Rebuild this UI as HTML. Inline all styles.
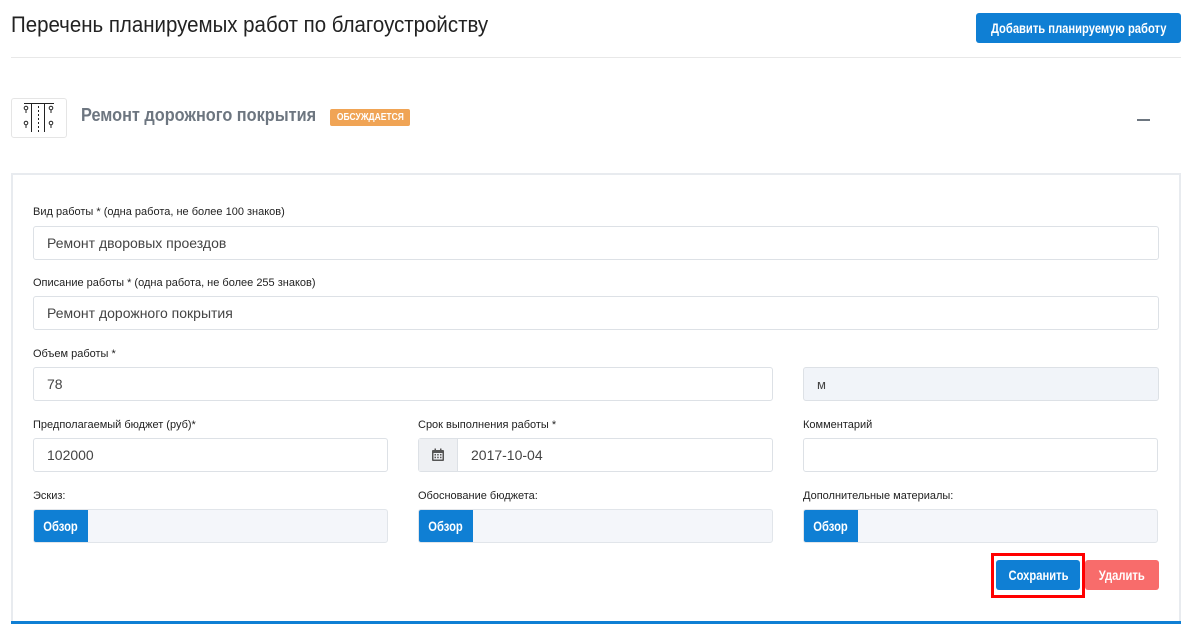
<!DOCTYPE html>
<html><head><meta charset="utf-8"><style>
*{box-sizing:border-box;margin:0;padding:0}
body{width:1193px;height:641px;background:#fff;font-family:"Liberation Sans",sans-serif;position:relative;overflow:hidden;color:#333}
.a{position:absolute}
.cond{font-weight:bold;white-space:nowrap}
.cond i{font-style:normal;display:inline-block;transform:scaleX(0.8)}
.btn{position:absolute;color:#fff;border-radius:3px;display:flex;align-items:center;justify-content:center;font-size:14px}
.lbl{position:absolute;font-size:11px;color:#222}
.inp{position:absolute;height:34px;border:1px solid #dde1e6;border-radius:3px;font-size:14px;color:#444;padding-left:13px;display:flex;align-items:center;background:#fff}
.file{position:absolute;height:34px;border:1px solid #e1e5ea;border-radius:3px;background:#f4f6fa;overflow:hidden}
.file span{position:absolute;left:-1px;top:-1px;height:34px;width:55px;background:#0f7fd4;color:#fff;display:flex;align-items:center;justify-content:center;font-size:14px;border-radius:3px 0 0 3px}
</style></head><body>
<div class="a" style="left:11px;top:12px;font-size:22px;color:#222;transform:scaleX(0.93);transform-origin:left;white-space:nowrap">Перечень планируемых работ по благоустройству</div>
<div class="btn cond" style="left:976px;top:13px;width:205px;height:30px;background:#0f7fd4"><i>Добавить планируемую работу</i></div>
<div class="a" style="left:11px;top:57px;width:1170px;height:1px;background:#e8e8e8"></div>
<div class="a" style="left:11px;top:98px;width:56px;height:40px;border:1px solid #e5e5e5;border-radius:3px">
<svg width="54" height="38" viewBox="0 0 54 38" style="position:absolute;left:0;top:0"><g stroke="#222" stroke-width="1" fill="none"><line x1="12" y1="4.5" x2="42" y2="4.5"/><line x1="19.5" y1="4" x2="19.5" y2="33"/><line x1="32.5" y1="4" x2="32.5" y2="33"/><line x1="26.5" y1="7" x2="26.5" y2="33" stroke-dasharray="2,2"/><circle cx="14" cy="9" r="1.8"/><line x1="14" y1="11" x2="14" y2="14"/><circle cx="14" cy="24" r="1.8"/><line x1="14" y1="26" x2="14" y2="29"/><circle cx="39" cy="9" r="1.8"/><line x1="39" y1="11" x2="39" y2="14"/><circle cx="39" cy="24" r="1.8"/><line x1="39" y1="26" x2="39" y2="29"/></g></svg></div>
<div class="a cond" style="left:81px;top:105px;font-size:18px;color:#6d7680"><i style="transform:scaleX(0.905);transform-origin:left">Ремонт дорожного покрытия</i></div>
<div class="a cond" style="left:330px;top:109px;width:80px;height:17px;background:#f0a455;color:#fff;font-size:10px;border-radius:2px;display:flex;align-items:center;justify-content:center"><i style="transform:scaleX(0.85)">ОБСУЖДАЕТСЯ</i></div>
<div class="a" style="left:1137px;top:119px;width:13px;height:2px;background:#6d7680"></div>
<div class="a" style="left:11px;top:173px;width:1170px;height:451px;border:2px solid #e8ebef;border-bottom:none"></div>
<div class="a" style="left:11px;top:621px;width:1170px;height:3px;background:#0f7fd4"></div>

<div class="lbl" style="left:33px;top:206px">Вид работы * (одна работа, не более 100 знаков)</div>
<div class="inp" style="left:33px;top:226px;width:1126px">Ремонт дворовых проездов</div>
<div class="lbl" style="left:33px;top:277px">Описание работы * (одна работа, не более 255 знаков)</div>
<div class="inp" style="left:33px;top:296px;width:1126px">Ремонт дорожного покрытия</div>
<div class="lbl" style="left:33px;top:348px">Объем работы *</div>
<div class="inp" style="left:33px;top:367px;width:740px">78</div>
<div class="inp" style="left:803px;top:367px;width:356px;background:#f1f4f9;font-size:13px">м</div>

<div class="lbl" style="left:33px;top:419px">Предполагаемый бюджет (руб)*</div>
<div class="inp" style="left:33px;top:438px;width:355px">102000</div>
<div class="lbl" style="left:418px;top:419px">Срок выполнения работы *</div>
<div class="inp" style="left:418px;top:438px;width:355px;padding-left:52px">2017-10-04</div>
<div class="a" style="left:419px;top:439px;width:39px;height:32px;background:#eef0f3;border-right:1px solid #dde1e6;display:flex;align-items:center;justify-content:center">
<svg width="14" height="14" viewBox="0 0 14 14"><rect x="1" y="2" width="12" height="11" rx="1" fill="#555"/><rect x="2.5" y="5" width="9" height="6.5" fill="#eef0f3"/><g fill="#555"><rect x="3.5" y="6" width="1.5" height="1.5"/><rect x="6.2" y="6" width="1.5" height="1.5"/><rect x="9" y="6" width="1.5" height="1.5"/><rect x="3.5" y="8.7" width="1.5" height="1.5"/><rect x="6.2" y="8.7" width="1.5" height="1.5"/><rect x="9" y="8.7" width="1.5" height="1.5"/></g><rect x="3.5" y="0.5" width="1.5" height="3" fill="#555"/><rect x="9" y="0.5" width="1.5" height="3" fill="#555"/></svg></div>
<div class="lbl" style="left:803px;top:419px">Комментарий</div>
<div class="inp" style="left:803px;top:438px;width:355px"></div>

<div class="lbl" style="left:33px;top:490px">Эскиз:</div>
<div class="file" style="left:33px;top:509px;width:355px"><span class="cond"><i>Обзор</i></span></div>
<div class="lbl" style="left:418px;top:490px">Обоснование бюджета:</div>
<div class="file" style="left:418px;top:509px;width:355px"><span class="cond"><i>Обзор</i></span></div>
<div class="lbl" style="left:803px;top:490px">Дополнительные материалы:</div>
<div class="file" style="left:803px;top:509px;width:355px"><span class="cond"><i>Обзор</i></span></div>

<div class="a" style="left:991px;top:553px;width:94px;height:45px;border:3px solid #f00"></div>
<div class="btn cond" style="left:996px;top:560px;width:84px;height:30px;background:#0f7fd4"><i>Сохранить</i></div>
<div class="btn cond" style="left:1085px;top:560px;width:74px;height:30px;background:#f86c6b"><i>Удалить</i></div>
</body></html>
